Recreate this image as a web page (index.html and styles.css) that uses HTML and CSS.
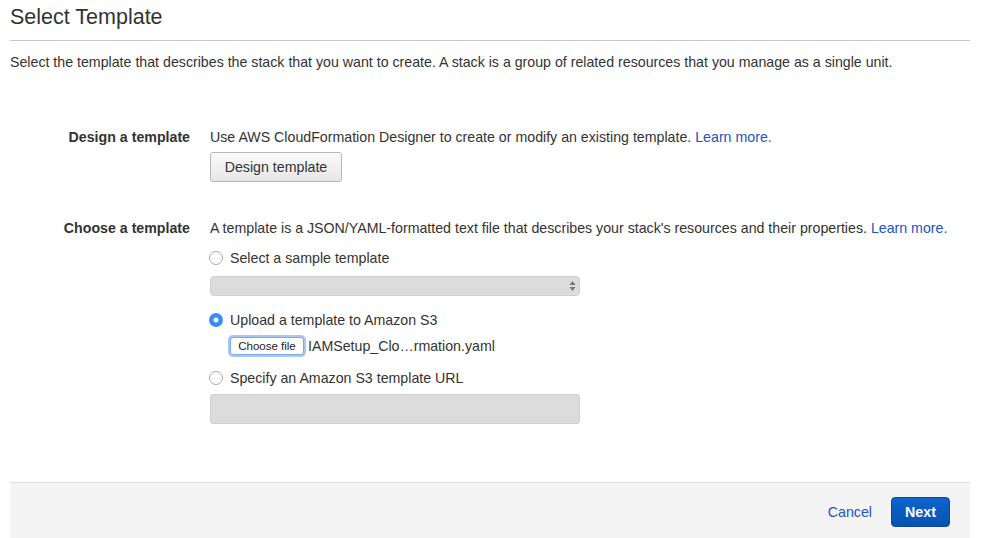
FILE: index.html
```html
<!DOCTYPE html>
<html>
<head>
<meta charset="utf-8">
<link rel="stylesheet" href="styles.css">
</head>
<body>
<div class="page">
  <h1 class="title">Select Template</h1>
  <div class="rule"></div>
  <p class="desc">Select the template that describes the stack that you want to create. A stack is a group of related resources that you manage as a single unit.</p>

  <div class="form">
    <div class="row">
      <div class="label">Design a template</div>
      <div class="content">
        <div class="line">Use AWS CloudFormation Designer to create or modify an existing template. <a class="link" href="#">Learn more.</a></div>
        <button class="btn">Design template</button>
      </div>
    </div>

    <div class="row row-choose">
      <div class="label">Choose a template</div>
      <div class="content">
        <div class="line">A template is a JSON/YAML-formatted text file that describes your stack's resources and their properties. <a class="link" href="#">Learn more.</a></div>

        <div class="line radio-line r1"><span class="radio"></span>Select a sample template</div>
        <div class="select"><span class="arrows"><svg width="7" height="12" viewBox="0 0 7 12"><path d="M3.5 1 L6.5 5 H0.5 Z" fill="#777"/><path d="M3.5 11 L6.5 7 H0.5 Z" fill="#777"/></svg></span></div>

        <div class="line radio-line r2"><span class="radio checked"></span>Upload a template to Amazon S3</div>
        <div class="file-row"><button class="file-btn">Choose file</button><span class="file-name">IAMSetup_Clo…rmation.yaml</span></div>

        <div class="line radio-line r3"><span class="radio"></span>Specify an Amazon S3 template URL</div>
        <div class="url-input"></div>
      </div>
    </div>
  </div>

  <div class="footer">
    <a class="cancel" href="#">Cancel</a>
    <button class="next">Next</button>
  </div>
</div>
</body>
</html>
```
FILE: styles.css
```css
* { box-sizing: border-box; }
html, body { margin: 0; padding: 0; background: #fff; }
body {
  font-family: "Liberation Sans", Arial, Helvetica, sans-serif;
  font-size: 14.2px;
  color: #333;
  height: 538px;
  overflow: hidden;
}
.page {
  margin-left: 10px;
  width: 960px;
}
.title {
  margin: 0;
  padding-top: 4px;
  font-size: 21.5px;
  font-weight: normal;
  line-height: 26px;
  color: #333;
}
.rule {
  margin-top: 10px;
  height: 1px;
  background: #c8c8c8;
}
.desc {
  margin: 11px 0 0 0;
  line-height: 20px;
}
.form { margin-top: 55px; }
.row {
  display: grid;
  grid-template-columns: 180px 1fr;
  column-gap: 20px;
}
.row-choose { margin-top: 36px; }
.label {
  text-align: right;
  font-weight: bold;
  line-height: 20px;
}
.content { display: flex; flex-direction: column; align-items: flex-start; }
.line { line-height: 20px; }
.link { color: #2354bf; text-decoration: none; }
.btn {
  margin-top: 5px;
  height: 30px;
  width: 132px;
  padding: 0;
  font-family: inherit;
  font-size: 14.2px;
  color: #333;
  background: linear-gradient(#fbfbfb, #e6e6e6);
  border: 1px solid #b8b8b8;
  border-radius: 3px;
}
.radio-line { display: flex; align-items: center; }
.r1 { margin-top: 10px; }
.r2 { margin-top: 14px; }
.r3 { margin-top: 13px; }
.radio {
  width: 14px;
  height: 14px;
  border-radius: 50%;
  border: 1px solid #a8a8a8;
  background: #fff;
  margin-left: -1px;
  margin-right: 7px;
  flex: none;
}
.radio.checked {
  border: none;
  background: radial-gradient(circle, #fff 0 2.2px, #3a8ef3 2.8px);
}
.select {
  margin-top: 8px;
  width: 370px;
  height: 20px;
  background: #dcdcdc;
  border: 1px solid #d0d0d0;
  border-radius: 4px;
  display: flex;
  justify-content: flex-end;
  align-items: center;
  padding-right: 3px;
}
.arrows { display: flex; }
.file-row {
  margin-top: 7px;
  margin-left: 20px;
  display: flex;
  align-items: center;
  height: 18px;
}
.file-btn {
  height: 18px;
  width: 74px;
  padding: 0;
  font-family: inherit;
  font-size: 11.5px;
  color: #222;
  background: #fff;
  border: 1px solid #7da7ea;
  border-radius: 3px;
  box-shadow: 0 0 0 2px #a9c7f3;
}
.file-name { margin-left: 4px; line-height: 18px; }
.url-input {
  margin-top: 6px;
  width: 370px;
  height: 30px;
  background: #dcdcdc;
  border: 1px solid #d0d0d0;
  border-radius: 3px;
}
.footer {
  margin-top: 58px;
  height: 56px;
  background: #f4f4f4;
  border-top: 1px solid #dedede;
  display: flex;
  justify-content: flex-end;
  align-items: flex-start;
  padding: 14px 20px 0 0;
}
.cancel {
  color: #2354bf;
  text-decoration: none;
  line-height: 30px;
  margin-right: 19px;
}
.next {
  width: 59px;
  height: 30px;
  padding: 0;
  font-family: inherit;
  font-size: 14.2px;
  font-weight: bold;
  color: #fff;
  background: linear-gradient(#0c64cf, #0751b0);
  border: 1px solid #0a4a9e;
  border-radius: 4px;
}
```
